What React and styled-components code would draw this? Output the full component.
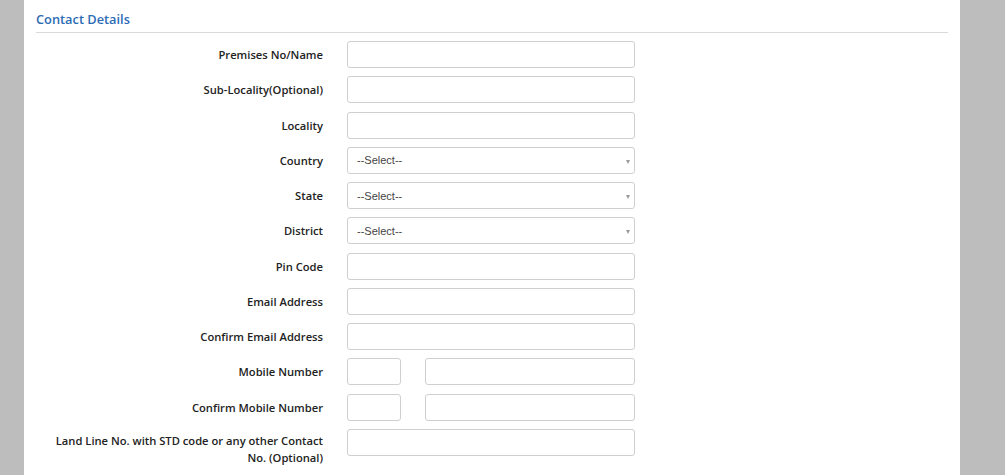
import styled, { createGlobalStyle } from 'styled-components';

const GlobalStyle = createGlobalStyle`
  html, body {
    margin: 0;
    padding: 0;
    background: #bdbdbd;
    font-family: "Open Sans", "Liberation Sans", sans-serif;
  }
  * { box-sizing: border-box; }
`;

const Page = styled.div`
  width: 1005px;
  height: 475px;
  overflow: hidden;
  background: #bdbdbd;
  padding: 0 45px 0 24px;
`;

const Panel = styled.div`
  background: #fff;
  height: 100%;
  padding: 11px 12px 0 12px;
`;

const Heading = styled.h3`
  margin: 0;
  font-size: 12.8px;
  font-weight: 600;
  color: #2c6cb5;
  padding-bottom: 4px;
  border-bottom: 1px solid #d9d9d9;
  line-height: 17px;
`;

const Form = styled.div`
  padding-top: 8px;
  display: flex;
  flex-direction: column;
  gap: 8.27px;
`;

const Row = styled.div`
  display: flex;
  align-items: flex-start;
`;

const Label = styled.label`
  width: 287px;
  padding-left: 14px;
  text-align: right;
  font-size: 11.2px;
  font-weight: 600;
  color: #222;
  line-height: 17px;
  padding-top: ${(p) => (p.$wrap ? '3px' : '5px')};
  flex-shrink: 0;
`;

const Fields = styled.div`
  margin-left: 24px;
  display: flex;
  gap: 24px;
`;

const Input = styled.div`
  width: ${(p) => p.$w || 288}px;
  height: 27px;
  border: 1px solid #cfcfcf;
  border-radius: 3px;
  background: #fff;
`;

const Select = styled.div`
  width: 288px;
  height: 27px;
  border: 1px solid #cfcfcf;
  border-radius: 3px;
  background: #fff;
  display: flex;
  align-items: center;
  justify-content: space-between;
  padding: 0 4px 0 9px;
  font-family: "Liberation Sans", Arial, sans-serif;
  font-size: 11px;
  color: #444;
`;

const Arrow = styled.span`
  width: 0;
  height: 0;
  border-left: 2.5px solid transparent;
  border-right: 2.5px solid transparent;
  border-top: 4px solid #999;
  margin-top: 3px;
`;

const rows = [
  { label: 'Premises No/Name' },
  { label: 'Sub-Locality(Optional)' },
  { label: 'Locality' },
  { label: 'Country', select: true },
  { label: 'State', select: true },
  { label: 'District', select: true },
  { label: 'Pin Code' },
  { label: 'Email Address' },
  { label: 'Confirm Email Address' },
  { label: 'Mobile Number', split: true },
  { label: 'Confirm Mobile Number', split: true },
  { label: 'Land Line No. with STD code or any other Contact No. (Optional)', wrap: true },
];

function App() {
  return (
    <>
      <GlobalStyle />
      <Page>
        <Panel>
          <Heading>Contact Details</Heading>
          <Form>
            {rows.map((r) => (
              <Row key={r.label}>
                <Label $wrap={r.wrap}>{r.label}</Label>
                <Fields>
                  {r.select ? (
                    <Select>
                      --Select--
                      <Arrow />
                    </Select>
                  ) : r.split ? (
                    <>
                      <Input $w={54} />
                      <Input $w={210} />
                    </>
                  ) : (
                    <Input />
                  )}
                </Fields>
              </Row>
            ))}
          </Form>
        </Panel>
      </Page>
    </>
  );
}

export default App;
